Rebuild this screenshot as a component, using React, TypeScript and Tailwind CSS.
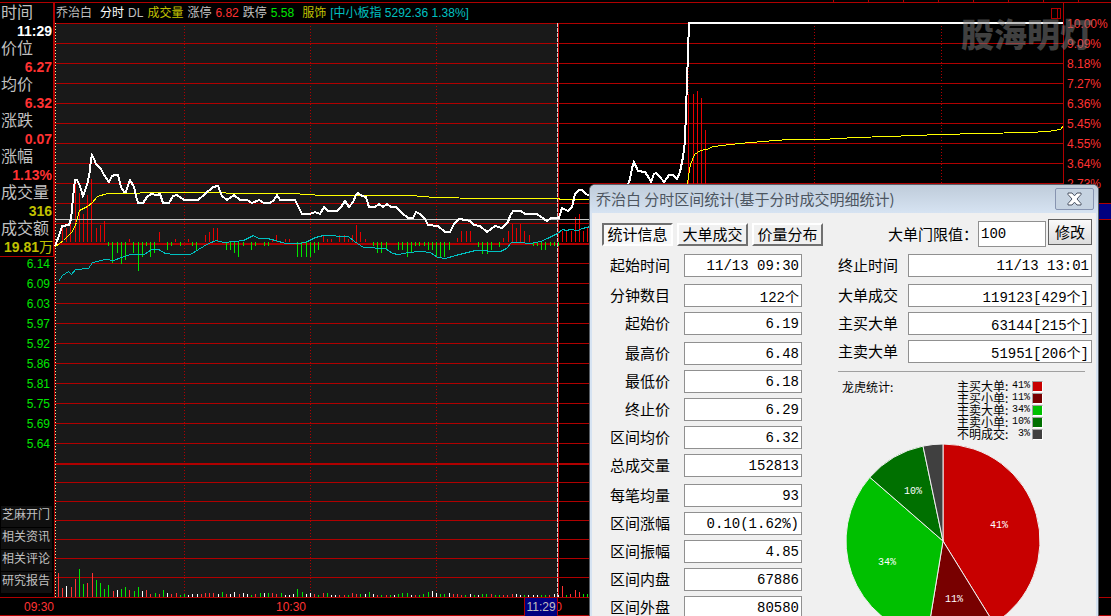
import { useState } from "react";
import clsx from "clsx";

type Point = [number, number];

const percentLabels = [
  "10.00%", "9.09%", "8.18%", "7.27%", "6.36%", "5.45%", "4.55%", "3.64%", "2.73%",
];

const priceLabels = ["6.14", "6.09", "6.03", "5.97", "5.92", "5.86", "5.81", "5.75", "5.69", "5.64"];

const quoteRows = [
  { label: "时间", value: "11:29", color: "text-white" },
  { label: "价位", value: "6.27", color: "text-[#ff3232]" },
  { label: "均价", value: "6.32", color: "text-[#ff3232]" },
  { label: "涨跌", value: "0.07", color: "text-[#ff3232]" },
  { label: "涨幅", value: "1.13%", color: "text-[#ff3232]" },
  { label: "成交量", value: "316", color: "text-[#c0c000]" },
];

const sideLinks = ["芝麻开门", "相关资讯", "相关评论", "研究报告"];

// fields are grouped the way the dialog spaces them
const leftFields = [
  [["起始时间", "11/13 09:30"]],
  [["分钟数目", "122个"], ["起始价", "6.19"]],
  [["最高价", "6.48"], ["最低价", "6.18"], ["终止价", "6.29"], ["区间均价", "6.32"], ["总成交量", "152813"]],
  [["每笔均量", "93"], ["区间涨幅", "0.10(1.62%)"], ["区间振幅", "4.85"], ["区间内盘", "67886"], ["区间外盘", "80580"]],
];

const rightFields = [
  [["终止时间", "11/13 13:01"]],
  [["大单成交", "119123[429个]"], ["主买大单", "63144[215个]"], ["主卖大单", "51951[206个]"]],
];

const slices = [
  { name: "主买大单", text: "41%", share: 41.2, fill: "#c80000", swatch: "bg-[#c80000]", at: [56, -17] },
  { name: "主买小单", text: "11%", share: 11.4, fill: "#780000", swatch: "bg-[#780000]", at: [11, 57] },
  { name: "主卖大单", text: "34%", share: 33.8, fill: "#00c000", swatch: "bg-[#00c000]", at: [-56, 20] },
  { name: "主卖小单", text: "10%", share: 10.3, fill: "#007000", swatch: "bg-[#007000]", at: [-30, -51] },
  { name: "不明成交", text: "3%", share: 3.3, fill: "#404040", swatch: "bg-[#404040]", at: null },
];

const priceLine: Point[] = [
  [55, 246], [57, 241], [60, 233], [62, 226], [69, 225], [71, 219], [73, 198], [75, 180], [77, 180], [80, 186],
  [83, 196], [86, 188], [88, 181], [90, 170], [91, 159], [92, 155], [94, 159], [96, 164], [101, 169], [104, 175],
  [109, 182], [112, 176], [115, 175], [118, 175], [121, 187], [124, 192], [126, 192], [128, 185], [130, 180],
  [134, 187], [136, 196], [138, 203], [143, 203], [147, 197], [151, 194], [157, 195], [160, 194], [163, 203],
  [169, 203], [173, 196], [177, 195], [184, 200], [198, 200], [205, 194], [213, 187], [218, 186], [222, 196],
  [227, 200], [234, 195], [240, 200], [247, 200], [252, 203], [259, 200], [264, 203], [270, 203], [274, 200],
  [277, 195], [280, 200], [295, 200], [298, 206], [302, 214], [310, 214], [315, 212], [320, 214], [324, 207],
  [328, 211], [337, 211], [341, 207], [345, 201], [349, 207], [353, 202], [356, 195], [358, 193], [362, 196],
  [366, 197], [369, 207], [375, 207], [379, 204], [383, 207], [387, 204], [391, 207], [396, 207], [402, 213],
  [408, 218], [413, 218], [416, 212], [420, 214], [425, 219], [428, 225], [438, 226], [445, 232], [450, 232],
  [454, 224], [459, 219], [466, 220], [470, 221], [474, 225], [480, 226], [487, 232], [495, 226], [502, 228],
  [508, 222], [510, 216], [513, 211], [521, 211], [525, 214], [537, 214], [544, 219], [547, 221], [551, 218],
  [559, 218], [562, 208], [568, 211], [572, 207], [575, 194], [579, 190], [582, 190], [586, 194], [590, 196],
  [600, 204], [626, 190], [630, 179], [632, 168], [634, 162], [638, 171], [645, 172], [649, 178], [651, 182],
  [654, 174], [656, 173], [660, 177], [664, 182], [667, 178], [669, 175], [673, 175], [677, 179], [680, 172],
  [683, 157], [685, 141], [686, 110], [687, 82], [688, 52], [689, 23], [1063, 23],
];

const averageLine: Point[] = [
  [55, 246], [63, 240], [68, 235], [72, 231], [76, 222], [79, 210], [87, 206], [92, 202], [97, 196], [107, 193],
  [125, 193], [155, 192], [292, 193], [322, 195], [410, 195], [435, 197], [482, 198], [556, 198], [562, 199],
  [680, 199], [687, 184], [688, 175], [690, 164], [694, 154], [700, 150], [706, 149], [713, 146], [730, 144],
  [750, 142], [788, 139], [821, 139], [855, 137], [888, 136], [940, 134], [980, 133], [1027, 132], [1048, 131],
  [1060, 129], [1063, 125],
];

const indexLine: Point[] = [
  [58, 281], [62, 275], [68, 271], [71, 274], [75, 269], [88, 268], [92, 262], [105, 259], [113, 260], [121, 257],
  [130, 254], [144, 254], [151, 249], [158, 249], [165, 253], [173, 254], [190, 254], [198, 249], [208, 243],
  [216, 240], [223, 242], [235, 241], [243, 240], [253, 235], [258, 238], [267, 238], [275, 240], [285, 243],
  [300, 243], [307, 241], [315, 237], [323, 235], [348, 236], [354, 241], [363, 247], [385, 248], [392, 253],
  [398, 254], [408, 252], [420, 251], [430, 252], [437, 257], [445, 258], [455, 255], [463, 253], [475, 250],
  [484, 250], [490, 251], [500, 251], [506, 248], [511, 242], [519, 242], [530, 243], [540, 241], [547, 238],
  [557, 233], [562, 229], [566, 230], [570, 229], [577, 230], [582, 228], [590, 226],
];

const upBars: Point[] = [
  [62, 226], [66, 228], [70, 224], [75, 180], [79, 193], [83, 214], [87, 195], [91, 179], [96, 228], [100, 225],
  [104, 221], [129, 239], [159, 232], [175, 239], [188, 239], [205, 235], [209, 232], [213, 228], [217, 228],
  [272, 239], [276, 235], [285, 239], [289, 239], [323, 235], [327, 239], [331, 239], [339, 235], [344, 235],
  [348, 239], [352, 235], [356, 225], [360, 232], [365, 239], [457, 238], [461, 231], [466, 231], [470, 231],
  [503, 238], [508, 231], [512, 224], [516, 228], [520, 224], [524, 231], [529, 235], [562, 231], [566, 231],
  [571, 231], [575, 217], [579, 214], [583, 231], [587, 228], [688, 94], [693, 94], [697, 91], [701, 98], [705, 130],
];

const downBars: Point[] = [
  [108, 245], [112, 262], [117, 252], [121, 263], [125, 259], [133, 252], [138, 270], [142, 256], [146, 245],
  [150, 256], [154, 252], [167, 249], [171, 245], [180, 245], [192, 245], [196, 249], [226, 249], [230, 249],
  [234, 252], [238, 256], [243, 245], [251, 249], [255, 245], [264, 245], [268, 245], [297, 256], [301, 256],
  [306, 256], [310, 256], [314, 252], [318, 249], [373, 245], [377, 252], [381, 252], [386, 249], [398, 249],
  [402, 249], [407, 256], [411, 252], [415, 245], [419, 245], [424, 245], [428, 249], [432, 249], [436, 256],
  [440, 256], [444, 256], [449, 249], [478, 246], [482, 253], [487, 253], [491, 249], [499, 246], [533, 245],
  [537, 245], [541, 249], [545, 249], [550, 245], [554, 245], [558, 245],
];

// one entry per minute: colour and height
const volumes = (
  "r23 r8 w10 r9 r17 g27 g12 r13 r23 g16 g13 g7 g11 r5 w6 g7 g9 r6 g5 g9 w5 r6 r2 g3 r2 g6 w3 r2 r3 g1 g2 w1 w2 w2 r2 " +
  "r3 r3 r3 w2 g4 r2 w2 w4 r2 w3 w2 g1 r2 g3 w3 g3 r3 r2 g3 w1 w1 w2 g7 g4 w2 w3 r2 g1 r3 g3 w1 w1 r1 r1 g1 r3 r2 g2 w2 " +
  "g4 w2 r1 g1 r1 g1 w1 g2 g3 g3 w1 r1 g1 g2 g4 w5 w3 g2 g2 w3 r2 r2 r1 g1 w2 g1 w1 g2 g2 r2 g1 g1 r1 r1 r2 w2 w1 g1 w1 " +
  "w1 w1 g1 g1 r1 w2 w1 r10 g1 r2 r6 r4 g2 g2"
).split(" ");

const volumeFill: Record<string, string> = { r: "#ff3232", g: "#00e600", w: "#ffffff" };

const gridLines = [
  ...Array.from({ length: 22 }, (_, i) => 23 + i * 20).filter((y) => y !== 243),
  482, 501, 520, 539, 558, 577,
];

const toPoints = (points: Point[]) => points.map((p) => p.join(",")).join(" ");

function MinuteChart() {
  return (
    <svg
      viewBox="55 23 1008 574"
      preserveAspectRatio="none"
      shapeRendering="crispEdges"
      className="block min-h-0 w-full flex-1 overflow-visible"
    >
      <rect x="55" y="23" width="503" height="574" fill="#191919" />
      {gridLines.map((y) => (
        <rect key={y} x="55" y={y} width="1008" height="1" fill="#b00000" />
      ))}
      <rect x="55" y="243" width="1008" height="2" fill="#b00000" />
      <rect x="55" y="463" width="1008" height="2" fill="#b00000" />
      {[184, 310, 436, 688, 814, 941].map((x) => (
        <path key={x} d={`M${x + 0.5} 26V597`} stroke="#b00000" strokeDasharray="1 2" />
      ))}
      <path d="M55.5 23V597" stroke="#f0f0a0" strokeDasharray="1 2" />
      <rect x="558" y="23" width="1" height="574" fill="#c80000" />
      <path d="M557.5 23V597" stroke="#d0d0d0" strokeDasharray="4 1" />

      {upBars.map(([x, y]) => (
        <rect key={x} x={x} y={y} width="1" height={242 - y} fill="#e60000" />
      ))}
      {downBars.map(([x, y]) => (
        <rect key={x} x={x} y="242" width="1" height={y - 242 + 1} fill="#00e600" />
      ))}
      {volumes.map((v, i) => {
        const height = Number(v.slice(1)) + 1;
        return (
          <rect
            key={i}
            x={Math.round(58 + i * 4.2)}
            y={597 - height}
            width="1"
            height={height}
            fill={volumeFill[v[0]]}
          />
        );
      })}

      <rect x="55" y="219" width="1008" height="1" fill="#c8c8c8" />
      <g fill="none" transform="translate(.5 .5)">
        <polyline points={toPoints(indexLine)} stroke="#00c0c0" />
        <polyline points={toPoints(averageLine)} stroke="#ffff00" />
      </g>
      <polyline points={toPoints(priceLine)} fill="none" stroke="#ffffff" strokeWidth="2" />
    </svg>
  );
}

function QuotePanel() {
  return (
    <dl className="border-r border-b border-[#b00000] pt-px text-base leading-[18px]">
      {quoteRows.map((row) => (
        <div key={row.label}>
          <dt className="pl-px text-[#c0c0c0]">{row.label}</dt>
          <dd className={clsx("pr-px text-right text-sm leading-[18px] font-bold", row.color)}>{row.value}</dd>
        </div>
      ))}
      <dt className="pl-px text-[#c0c0c0]">成交额</dt>
      <dd className="h-[18px] text-right text-sm leading-[18px] font-bold whitespace-nowrap text-[#c0c000]">
        19.81<span className="font-normal">万</span>
      </dd>
    </dl>
  );
}

function ChartHeader() {
  return (
    <header className="flex h-5 items-center gap-1 pl-px text-xs whitespace-nowrap text-[#c0c0c0]">
      <span className="mr-1">乔治白</span>
      <span className="text-white">分时</span>
      <span>DL</span>
      <span className="text-[#c0c000]">成交量</span>
      <span>涨停</span>
      <span className="text-[#ff3232]">6.82</span>
      <span>跌停</span>
      <span className="mr-1 text-[#00e600]">5.58</span>
      <span className="text-[#c0c000]">服饰</span>
      <span className="text-[#00c0c0]">[中小板指 5292.36 1.38%]</span>
      <svg width="11" height="11" className="mr-px ml-auto" fill="none" stroke="#b00000" shapeRendering="crispEdges">
        <path d="M.5 .5h9v10h-9zM6.5 1v9" />
      </svg>
    </header>
  );
}

function PieChart() {
  const r = 97;
  const edge = (percent: number) => {
    const a = (percent / 100) * Math.PI * 2;
    return `${(Math.sin(a) * r).toFixed(2)} ${(-Math.cos(a) * r).toFixed(2)}`;
  };
  let start = 0;

  return (
    <svg width="200" height="200" viewBox="-100 -100 200 200" className="mt-px ml-[5px] shrink-0">
      {slices.map((slice) => {
        const from = edge(start);
        start += slice.share;
        return (
          <path
            key={slice.name}
            d={`M0 0L${from}A${r} ${r} 0 0 1 ${edge(start)}Z`}
            fill={slice.fill}
            stroke="#f0f0f0"
          />
        );
      })}
      {slices.map(
        (slice) =>
          slice.at && (
            <text
              key={slice.name}
              x={slice.at[0]}
              y={slice.at[1] + 4}
              textAnchor="middle"
              fill="#ffffff"
              className="font-['Liberation_Mono',monospace] text-[10px]"
            >
              {slice.text}
            </text>
          ),
      )}
    </svg>
  );
}

interface FieldGroupsProps {
  groups: string[][][];
  labelClass: string;
}

function FieldGroups({ groups, labelClass }: FieldGroupsProps) {
  return (
    <div className="flex flex-col gap-[7px]">
      {groups.map((group) => (
        <div key={group[0][0]} className="flex flex-col gap-[5px]">
          {group.map(([name, value]) => (
            <label key={name} className="flex h-[23px] items-center">
              <span className={clsx("shrink-0 pb-0.5", labelClass)}>{name}</span>
              <input
                readOnly
                value={value}
                className="h-full min-w-0 flex-1 border border-[#909090] bg-white pr-0.5 text-right font-['Liberation_Mono','Noto_Sans_CJK_SC',monospace] text-sm outline-none"
              />
            </label>
          ))}
        </div>
      ))}
    </div>
  );
}

function StatsDialog() {
  const tabs = ["统计信息", "大单成交", "价量分布"];
  const [activeTab, setActiveTab] = useState(tabs[0]);
  const [limit, setLimit] = useState("100");

  return (
    <section
      role="dialog"
      aria-label="分时区间统计"
      className="absolute top-[184px] right-3 bottom-0 w-[510px] overflow-hidden rounded-t-md border border-b-0 border-[#5a6068] bg-[#d6e3f2] font-['Noto_Sans_CJK_SC',sans-serif] text-[15px] leading-5 text-black"
    >
      {/* title bar */}
      <div className="flex h-7 items-center justify-between bg-linear-to-b from-[#bfccda] to-[#d6e3f2] pr-1 pl-1.5">
        <h2 className="whitespace-nowrap text-[#4c5560]">
          乔治白 分时区间统计(基于分时成交明细统计)
        </h2>
        <button
          aria-label="关闭"
          className="flex h-[22px] w-[39px] items-center justify-center rounded-xs border border-[#8794b0] bg-[#c6d3e1]"
        >
          <svg width="15" height="14" viewBox="0 0 15 14">
            <path
              d="M1 1h4l2.500 2.800L10 1h4v1.500L10 7l4 4.500V13h-4l-2.500-2.800L5 13H1v-1.500L5 7 1 2.500z"
              fill="#ffffff"
              stroke="#4a5262"
              strokeLinejoin="round"
            />
          </svg>
        </button>
      </div>

      <div className="mx-0.5 min-h-full bg-[#f0f0f0] pt-2 pr-1 pl-2.5">
        {/* tabs and order limit */}
        <div className="flex h-[26px] items-center whitespace-nowrap">
          <div role="tablist" className="flex gap-1">
            {tabs.map((tab) => (
              <button
                key={tab}
                role="tab"
                aria-selected={tab === activeTab}
                onClick={() => setActiveTab(tab)}
                className={clsx(
                  "flex h-[23px] w-[71px] items-center justify-center border-2",
                  tab === activeTab
                    ? "border-t-[#707070] border-r-white border-b-white border-l-[#707070] bg-[#f8f8f8]"
                    : "border-t-white border-r-[#707070] border-b-[#707070] border-l-white",
                )}
              >
                {tab}
              </button>
            ))}
          </div>
          <label className="ml-auto flex items-center">
            大单门限值：
            <input
              value={limit}
              onChange={(e) => setLimit(e.target.value)}
              className="h-[26px] w-[68px] border border-[#909090] bg-white pl-0.5 font-['Liberation_Mono',monospace] text-sm outline-none"
            />
          </label>
          <button className="mb-1 ml-0.5 h-[26px] w-11 border border-[#606060] bg-linear-to-b from-[#fafafa] to-[#dcdcdc]">
            修改
          </button>
        </div>

        <div className="mt-[7px] flex justify-between">
          <div className="w-[200px]">
            <FieldGroups groups={leftFields} labelClass="w-[68px] mr-3.5 text-right" />
          </div>

          <div className="w-[254px]">
            <FieldGroups groups={rightFields} labelClass="w-[60px] mr-2.5" />
            <hr className="mt-2 mr-[7px] border-[#a0a0a0]" />

            {/* legend */}
            <div className="flex justify-between pt-2 pr-[49px] pl-1 text-xs leading-3 whitespace-nowrap">
              <h3 className="pt-px">龙虎统计:</h3>
              <ul>
                {slices.map((slice) => (
                  <li key={slice.name} className="flex h-3 items-center justify-end gap-0.5">
                    <span className="flex w-[73px] justify-between">
                      <span>{slice.name}:</span>
                      <span className="font-['Liberation_Mono',monospace] text-[10px]">{slice.text}</span>
                    </span>
                    <span
                      className={clsx(
                        "size-[11px] border border-t-[#a0a0a0] border-r-white border-b-white border-l-[#a0a0a0]",
                        slice.swatch,
                      )}
                    />
                  </li>
                ))}
              </ul>
            </div>
            <PieChart />
          </div>
        </div>
      </div>
    </section>
  );
}

export default function App() {
  return (
    <div className="relative flex h-screen w-full flex-col overflow-hidden bg-black font-['Liberation_Sans','Noto_Sans_CJK_SC',sans-serif]">
      <div className="flex h-[3px] shrink-0 justify-end gap-[34px] border-b border-[#b00000] pr-8">
        {Array.from({ length: 8 }, (_, i) => (
          <span key={i} className="w-px bg-[#b00000]" />
        ))}
      </div>

      <main className="flex min-h-0 flex-1">
        <aside className="flex w-[54px] shrink-0 flex-col">
          <QuotePanel />
          <ul className="flex flex-col gap-2 pt-px pr-1 text-right text-xs text-[#00e600]">
            {priceLabels.map((price) => (
              <li key={price} className="h-3 leading-3">{price}</li>
            ))}
          </ul>
          <nav className="mt-auto mb-1 flex flex-col gap-px">
            {sideLinks.map((link) => (
              <a key={link} href="#" className="mr-0.5 ml-px h-[21px] bg-[#101010] pl-px text-xs leading-[18px] text-[#c0c0c0]">
                {link}
              </a>
            ))}
          </nav>
        </aside>

        <section className="flex min-w-0 flex-1 flex-col border-l border-[#b00000]">
          <ChartHeader />
          <MinuteChart />
        </section>

        <aside className="w-12 shrink-0 border-l border-[#b00000] pt-[11px] text-xs leading-5 text-[#ff3232]">
          <ul className="pl-[3px]">
            {percentLabels.map((label) => (
              <li key={label}>{label}</li>
            ))}
          </ul>
          <div className="mt-[9px] h-[17px] border-y border-[#b00000] bg-[#000080]" />
        </aside>
      </main>

      {/* time axis */}
      <footer className="flex h-[19px] shrink-0 items-center border-y border-[#b00000] pr-12 text-right text-xs text-[#ff3232]">
        <span className="w-[55px] shrink-0 pr-px">09:30</span>
        <div className="grid flex-1 grid-cols-4">
          <span className="pr-px">10:30</span>
          <div className="relative">
            <span className="-mr-[3px]">11:30</span>
            <span className="absolute -top-px right-px h-[18px] w-[34px] border-x border-[#b00000] bg-[#000080] text-center leading-[18px] text-[#c0c0c0]">
              11:29
            </span>
          </div>
        </div>
      </footer>

      <div className="pointer-events-none absolute top-3 right-[18px] text-[33px] leading-[48px] font-black text-[#808080]/50">
        股海明灯
      </div>

      <StatsDialog />
    </div>
  );
}
